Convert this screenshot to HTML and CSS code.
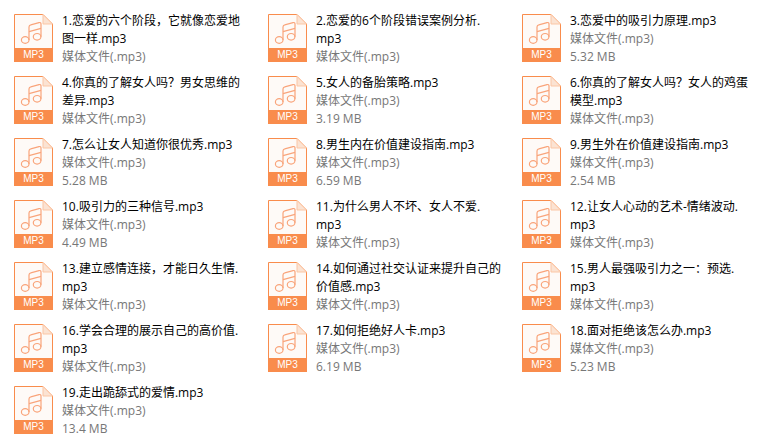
FILE: index.html
```html
<!DOCTYPE html>
<html lang="zh-CN">
<head>
<meta charset="utf-8">
<title>MP3</title>
<link rel="stylesheet" href="styles.css">
</head>
<body>
<svg class="defs" width="0" height="0" aria-hidden="true">
  <symbol id="mp3" viewBox="0 0 39 34">
    <path d="M.5 34V.5H29L38.500 10V34" fill="#fefaf7" stroke="#f98c4c"/>
    <path d="M29 .5V10H38.500Z" fill="#fbe3d3" stroke="#fbc6a5"/>
    <g fill="none" stroke="#f9a47a" stroke-width="1.200">
      <ellipse cx="11.200" cy="26" rx="3.800" ry="3.300"/>
      <ellipse cx="23.100" cy="22.800" rx="3.800" ry="3.300"/>
      <path d="M15 26V13Q15 11.200 16.800 10.800L25 8.600Q27 8.200 27 10V22.800"/>
      <path d="M15 17.600L27 14.400"/>
    </g>
  </symbol>
</svg>
<main class="grid">
  <article class="item"><div class="icon"><svg class="sheet"><use href="#mp3"/></svg><span class="tag">MP3</span></div><div class="meta"><p class="name">1.恋爱的六个阶段，它就像恋爱地<br>图一样.mp3</p><p class="info">媒体文件(.mp3)</p></div></article>
  <article class="item"><div class="icon"><svg class="sheet"><use href="#mp3"/></svg><span class="tag">MP3</span></div><div class="meta"><p class="name">2.恋爱的6个阶段错误案例分析.<br>mp3</p><p class="info">媒体文件(.mp3)</p></div></article>
  <article class="item"><div class="icon"><svg class="sheet"><use href="#mp3"/></svg><span class="tag">MP3</span></div><div class="meta"><p class="name">3.恋爱中的吸引力原理.mp3</p><p class="info">媒体文件(.mp3)</p><p class="info">5.32 MB</p></div></article>
  <article class="item"><div class="icon"><svg class="sheet"><use href="#mp3"/></svg><span class="tag">MP3</span></div><div class="meta"><p class="name">4.你真的了解女人吗？男女思维的<br>差异.mp3</p><p class="info">媒体文件(.mp3)</p></div></article>
  <article class="item"><div class="icon"><svg class="sheet"><use href="#mp3"/></svg><span class="tag">MP3</span></div><div class="meta"><p class="name">5.女人的备胎策略.mp3</p><p class="info">媒体文件(.mp3)</p><p class="info">3.19 MB</p></div></article>
  <article class="item"><div class="icon"><svg class="sheet"><use href="#mp3"/></svg><span class="tag">MP3</span></div><div class="meta"><p class="name">6.你真的了解女人吗？女人的鸡蛋<br>模型.mp3</p><p class="info">媒体文件(.mp3)</p></div></article>
  <article class="item"><div class="icon"><svg class="sheet"><use href="#mp3"/></svg><span class="tag">MP3</span></div><div class="meta"><p class="name">7.怎么让女人知道你很优秀.mp3</p><p class="info">媒体文件(.mp3)</p><p class="info">5.28 MB</p></div></article>
  <article class="item"><div class="icon"><svg class="sheet"><use href="#mp3"/></svg><span class="tag">MP3</span></div><div class="meta"><p class="name">8.男生内在价值建设指南.mp3</p><p class="info">媒体文件(.mp3)</p><p class="info">6.59 MB</p></div></article>
  <article class="item"><div class="icon"><svg class="sheet"><use href="#mp3"/></svg><span class="tag">MP3</span></div><div class="meta"><p class="name">9.男生外在价值建设指南.mp3</p><p class="info">媒体文件(.mp3)</p><p class="info">2.54 MB</p></div></article>
  <article class="item"><div class="icon"><svg class="sheet"><use href="#mp3"/></svg><span class="tag">MP3</span></div><div class="meta"><p class="name">10.吸引力的三种信号.mp3</p><p class="info">媒体文件(.mp3)</p><p class="info">4.49 MB</p></div></article>
  <article class="item"><div class="icon"><svg class="sheet"><use href="#mp3"/></svg><span class="tag">MP3</span></div><div class="meta"><p class="name">11.为什么男人不坏、女人不爱.<br>mp3</p><p class="info">媒体文件(.mp3)</p></div></article>
  <article class="item"><div class="icon"><svg class="sheet"><use href="#mp3"/></svg><span class="tag">MP3</span></div><div class="meta"><p class="name">12.让女人心动的艺术-情绪波动.<br>mp3</p><p class="info">媒体文件(.mp3)</p></div></article>
  <article class="item"><div class="icon"><svg class="sheet"><use href="#mp3"/></svg><span class="tag">MP3</span></div><div class="meta"><p class="name">13.建立感情连接，才能日久生情.<br>mp3</p><p class="info">媒体文件(.mp3)</p></div></article>
  <article class="item"><div class="icon"><svg class="sheet"><use href="#mp3"/></svg><span class="tag">MP3</span></div><div class="meta"><p class="name">14.如何通过社交认证来提升自己的<br>价值感.mp3</p><p class="info">媒体文件(.mp3)</p></div></article>
  <article class="item"><div class="icon"><svg class="sheet"><use href="#mp3"/></svg><span class="tag">MP3</span></div><div class="meta"><p class="name">15.男人最强吸引力之一：预选.<br>mp3</p><p class="info">媒体文件(.mp3)</p></div></article>
  <article class="item"><div class="icon"><svg class="sheet"><use href="#mp3"/></svg><span class="tag">MP3</span></div><div class="meta"><p class="name">16.学会合理的展示自己的高价值.<br>mp3</p><p class="info">媒体文件(.mp3)</p></div></article>
  <article class="item"><div class="icon"><svg class="sheet"><use href="#mp3"/></svg><span class="tag">MP3</span></div><div class="meta"><p class="name">17.如何拒绝好人卡.mp3</p><p class="info">媒体文件(.mp3)</p><p class="info">6.19 MB</p></div></article>
  <article class="item"><div class="icon"><svg class="sheet"><use href="#mp3"/></svg><span class="tag">MP3</span></div><div class="meta"><p class="name">18.面对拒绝该怎么办.mp3</p><p class="info">媒体文件(.mp3)</p><p class="info">5.23 MB</p></div></article>
  <article class="item"><div class="icon"><svg class="sheet"><use href="#mp3"/></svg><span class="tag">MP3</span></div><div class="meta"><p class="name">19.走出跪舔式的爱情.mp3</p><p class="info">媒体文件(.mp3)</p><p class="info">13.4 MB</p></div></article>
</main>
</body>
</html>
```
FILE: styles.css
```css
html, body {
  margin: 0;
  background: #fff;
}
body {
  font-family: "Open Sans", "Noto Sans CJK SC", sans-serif;
  font-size: 12px;
  overflow: hidden;
}
.defs {
  position: absolute;
}
.grid {
  display: grid;
  grid-template-columns: repeat(3, 254px);
  grid-auto-rows: 62px;
  padding: 12px 0 0 14px;
}
.item {
  display: flex;
  gap: 9px;
}
.icon {
  display: flex;
  flex-direction: column;
  width: 39px;
  height: 48px;
  margin-top: 2px;
  flex: none;
}
.sheet {
  display: block;
  width: 39px;
  height: 34px;
}
.tag {
  height: 14px;
  line-height: 14px;
  background: #f98c4c;
  color: #fff;
  font-family: "Liberation Sans", sans-serif;
  font-size: 10px;
  text-align: center;
}
.meta {
  min-width: 0;
}
.name, .info {
  margin: 0;
  height: 18px;
  line-height: 18px;
  white-space: nowrap;
}
.name {
  height: auto;
  color: #000;
}
.info {
  color: #777;
}
```
